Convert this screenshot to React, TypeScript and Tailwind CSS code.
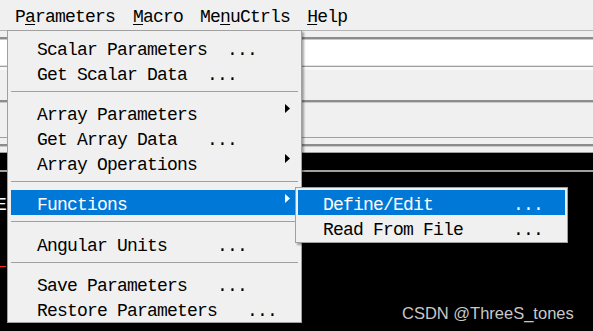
import React from "react";

const Arrow = ({ white }: { white?: boolean }) => (
  <svg
    width="5"
    height="9"
    viewBox="0 0 5 9"
    className="absolute right-[8px] top-[4px]"
  >
    <path d="M0 0 L5 4.5 L0 9 Z" fill={white ? "#ffffff" : "#000000"} />
  </svg>
);

function Item({
  label,
  arrow,
  active,
}: {
  label: string;
  arrow?: boolean;
  active?: boolean;
}) {
  return (
    <div
      className={
        active
          ? "relative h-[25px] flex items-center pl-[26px] pt-[4px] whitespace-pre bg-[#0078d7] text-white"
          : "relative h-[25px] flex items-center pl-[26px] pt-[4px] whitespace-pre text-black"
      }
    >
      {label}
      {arrow && <Arrow white={active} />}
    </div>
  );
}

function Sep({ tall }: { tall?: boolean }) {
  return (
    <div className={tall ? "h-[16px] pt-[6px]" : "h-[15px] pt-[6px]"}>
      <div className="h-px bg-[#a0a0a0]" />
    </div>
  );
}

export default function App() {
  const mono = { fontFamily: '"Liberation Mono", "DejaVu Sans Mono", monospace' };
  return (
    <div
      className="relative w-[593px] h-[331px] overflow-hidden bg-black flex flex-col text-[18px] tracking-[-0.8px] leading-none"
      style={mono}
    >
      {/* menu bar */}
      <div className="h-[30px] bg-[#f0f0f0] flex items-center pl-[7px] pt-[3px] text-black whitespace-pre">
        <div className="px-[8px]">
          P<span className="underline underline-offset-2">a</span>rameters
        </div>
        <div className="pl-[10px] pr-[8px]">
          <span className="underline underline-offset-2">M</span>acro
        </div>
        <div className="pl-[9px] pr-[8px]">
          Me<span className="underline underline-offset-2">n</span>uCtrls
        </div>
        <div className="pl-[9px] pr-[8px]">
          <span className="underline underline-offset-2">H</span>elp
        </div>
      </div>

      {/* background window bands */}
      <div className="h-px bg-[#b4b4b4]" />
      <div className="h-[6px] bg-[#f0f0f0]" />
      <div className="h-[2px] bg-[#8c8c8c]" />
      <div className="h-px bg-[#c8c8c8]" />
      <div className="h-[25px] bg-white" />
      <div className="h-px bg-[#e0e0e0]" />
      <div className="h-px bg-[#a0a0a0]" />
      <div className="h-[3px] bg-[#f8f8f8]" />
      <div className="h-[30px] bg-[#f0f0f0]" />
      <div className="h-[2px] bg-[#8c8c8c]" />
      <div className="h-px bg-[#c8c8c8]" />
      <div className="h-[34px] bg-[#f0f0f0]" />
      <div className="h-px bg-[#a0a0a0]" />
      <div className="h-[6px] bg-[#f0f0f0]" />
      <div className="h-[2px] bg-[#8c8c8c]" />
      <div className="h-px bg-[#c8c8c8]" />
      <div className="h-[5px] bg-[#f0f0f0]" />
      <div className="h-px bg-[#a0a0a0]" />
      <div className="h-[17px] bg-black" />
      <div className="h-[2px] bg-[#a0a0a0]" />
      <div className="flex-1 bg-black" />

      {/* left strip partial content */}
      <div className="absolute left-[-4px] top-[196px] text-white">E</div>
      <div className="absolute left-0 top-[266px] w-[6px] h-px bg-[#ff2020]" />

      {/* main dropdown */}
      <div className="absolute left-[7px] top-[30px] w-[295px] h-[293px] bg-[#f0f0f0] border border-[#a0a0a0] pt-[4px] px-[3px] shadow-[2px_2px_2px_rgba(0,0,0,0.35)]">
        <Item label="Scalar Parameters  ..." />
        <Item label="Get Scalar Data  ..." />
        <Sep />
        <Item label="Array Parameters" arrow />
        <Item label="Get Array Data   ..." />
        <Item label="Array Operations" arrow />
        <Sep />
        <Item label="Functions" arrow active />
        <Sep tall />
        <Item label="Angular Units     ..." />
        <Sep />
        <Item label="Save Parameters   ..." />
        <Item label="Restore Parameters   ..." />
      </div>

      {/* submenu */}
      <div className="absolute left-[295px] top-[187px] w-[273px] h-[56px] bg-[#f0f0f0] border border-[#a0a0a0] p-[2px] shadow-[2px_2px_2px_rgba(0,0,0,0.35)]">
        <div className="h-[25px] flex items-center pl-[25px] pt-[4px] whitespace-pre bg-[#0078d7] text-white">
          {"Define/Edit        ..."}
        </div>
        <div className="h-[25px] flex items-center pl-[25px] pt-[4px] whitespace-pre text-black">
          {"Read From File     ..."}
        </div>
      </div>

      {/* watermark */}
      <div
        className="absolute left-[402px] top-[305px] text-[16.5px] tracking-normal text-[#c8c8c8] leading-none"
        style={{ fontFamily: '"Liberation Sans", Arial, sans-serif' }}
      >
        CSDN @ThreeS_tones
      </div>
    </div>
  );
}
